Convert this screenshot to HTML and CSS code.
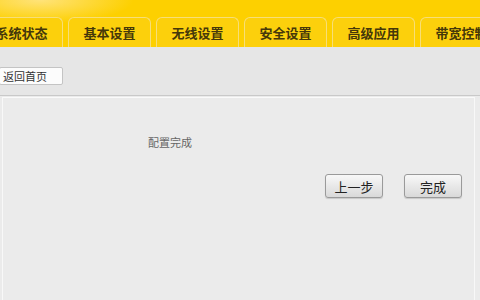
FILE: index.html
```html
<!DOCTYPE html>
<html lang="zh-CN">
<head>
    <meta charset="UTF-8">
    <title>路由器设置</title>
    <link rel="stylesheet" href="styles.css">
</head>
<body>
<div class="header">
    <div class="tabs">
        <div class="tab">系统状态</div>
        <div class="tab">基本设置</div>
        <div class="tab">无线设置</div>
        <div class="tab">安全设置</div>
        <div class="tab">高级应用</div>
        <div class="tab">带宽控制</div>
    </div>
</div>
<div class="toolbar">
    <button class="home-button">返回首页</button>
</div>
<div class="panel">
    <div class="message">配置完成</div>
    <div class="actions">
        <button class="step-button">上一步</button>
        <button class="step-button">完成</button>
    </div>
</div>
</body>
</html>
```

FILE: styles.css
```css
body {
    margin: 0;
    padding: 0;
    font-family: "Noto Sans CJK SC", "DejaVu Sans", sans-serif;
    background-color: #ebebeb;
    height: 300px;
    overflow: hidden;
}
.header {
    height: 47px;
    background: radial-gradient(ellipse 110px 28px at 40px 0, #ffe37a, #fdd000 85%);
    background-color: #fdd000;
    display: flex;
    align-items: flex-end;
    overflow: hidden;
}
.tabs {
    display: flex;
    gap: 5px;
    margin-left: -20px;
}
.tab {
    flex: none;
    width: 81px;
    height: 29px;
    line-height: 29px;
    text-align: center;
    font-size: 13px;
    font-weight: bold;
    color: #45380a;
    background-color: #fcd00c;
    border: 1px solid #f7de78;
    border-bottom: none;
    border-radius: 6px 6px 0 0;
}
.toolbar {
    height: 49px;
    background-color: #e6e6e6;
    border-bottom: 1px solid #c9c9c9;
    display: flex;
    align-items: center;
    padding-top: 2px;
    box-sizing: border-box;
}
.home-button {
    width: 64px;
    height: 18px;
    margin-left: -1px;
    margin-top: 7px;
    padding: 0 0 0 3px;
    text-align: left;
    font-family: inherit;
    font-size: 11px;
    line-height: 16px;
    color: #333;
    background-color: #fcfcfc;
    border: 1px solid #c4c4c4;
    border-radius: 2px;
}
.panel {
    margin: 1px 5px 0 2px;
    height: 210px;
    border-left: 1px solid #f8f8f8;
    border-right: 1px solid #f8f8f8;
    border-top: 1px solid #fafafa;
    background-color: #ebebeb;
}
.message {
    padding: 36px 0 0 145px;
    font-size: 11px;
    color: #666;
}
.actions {
    display: flex;
    justify-content: flex-end;
    gap: 21px;
    margin-top: 24px;
    padding-right: 12px;
}
.step-button {
    width: 58px;
    height: 24px;
    padding: 0;
    font-family: inherit;
    font-size: 13px;
    color: #222;
    background: linear-gradient(#f8f8f8, #d9d9d9);
    border: 1px solid #9a9a9a;
    border-radius: 3px;
    box-shadow: 0 1px 1px rgba(0, 0, 0, 0.15);
}
```
